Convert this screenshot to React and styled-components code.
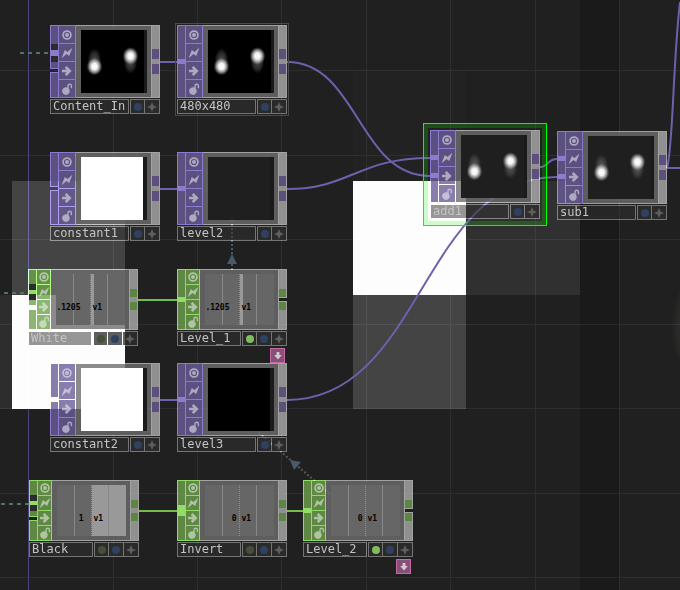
import React from "react";
import styled, { createGlobalStyle, css } from "styled-components";

const GlobalStyle = createGlobalStyle`
  * { box-sizing: border-box; }
  html, body, #root { margin: 0; min-height: 100vh; }
  body { background: #202020; overflow: hidden; }
  button { appearance: none; margin: 0; padding: 0; border: 0; background: none; font: inherit; }
`;

const MONO = '"DejaVu Sans Mono", "Liberation Mono", monospace';

const families = {
  top: { fill: "rgba(107, 92, 153, 0.8)", port: "#5d507f", glow: "#6c5ab0", live: "#8f7bcb" },
  chop: { fill: "rgba(110, 162, 76, 0.8)", port: "#5d8643", glow: "#70bb42", live: "#93dc66" },
};

/* Edges are added to whatever is beneath them, so they brighten over lit areas. */
const glowEdge = css`
  position: relative;
  border: 1px solid transparent;
  background-clip: padding-box;
  &::after {
    content: "";
    position: absolute;
    inset: -1px;
    border: inherit;
    border-color: ${(p) => p.$glow || "#545454"};
    mix-blend-mode: plus-lighter;
    pointer-events: none;
  }
`;

const Canvas = styled.main`
  position: relative;
  width: 100%;
  min-height: 100vh;
  overflow: hidden;
  background: #202020;
`;

const Tile = styled.div`
  position: absolute;
  left: ${(p) => p.$x}px;
  top: ${(p) => p.$y}px;
  width: ${(p) => p.$w}px;
  height: ${(p) => p.$h};
  background: ${(p) => p.$tone};
`;

const Glare = styled.div`
  position: absolute;
  left: 671px;
  top: 262px;
  width: 90px;
  height: 130px;
  border-radius: 50%;
  background: radial-gradient(closest-side, #3a3a38, #2a2a29 85%, #202020);
`;

const Layer = styled.svg`
  position: absolute;
  inset: 0;
  width: 100%;
  height: 100%;
  overflow: visible;
  fill: none;
  mix-blend-mode: ${(p) => (p.$additive ? "plus-lighter" : "normal")};
`;

const NodeFrame = styled.article`
  position: absolute;
  left: ${(p) => p.$x}px;
  top: ${(p) => p.$y}px;
  width: 110px;
  display: flex;
  flex-direction: column;
  gap: 1px;
  ${(p) => p.$state === "current" && css`
    outline: 1px solid #4a4a4a;
    outline-offset: 1px;
  `}
  ${(p) => p.$state === "selected" && css`
    &::before {
      content: "";
      position: absolute;
      inset: -7px;
      border: 1px solid #00ff00;
      box-shadow: inset 0 0 0 4px rgba(0, 255, 0, 0.2);
      pointer-events: none;
    }
  `}
`;

const Operator = styled.div`
  display: flex;
  height: ${(p) => (p.$kind === "top" ? 73 : 61)}px;
`;

const InputStrip = styled.div`
  position: relative;
  width: 8px;
  display: flex;
  flex-direction: column;
  gap: 3px;
`;

const InputPart = styled.div`
  ${glowEdge}
  border-right: 0;
  flex: ${(p) => (p.$h ? `0 0 ${p.$h}px` : "1")};
  background-color: ${(p) => p.$fill};
  &::after { inset: -1px 0 -1px -1px; }
`;

const Port = styled.span`
  position: absolute;
  left: 0;
  right: 0;
  top: ${(p) => p.$y}px;
  height: ${(p) => p.$h || 5}px;
  background: ${(p) => p.$tone};
`;

const ReferencePort = styled(Port)`
  left: 1px;
  border: solid #2c2c2c;
  border-width: 6px 0;
`;

const FlagColumn = styled.div`
  width: ${(p) => (p.$kind === "top" ? 18 : 15)}px;
  display: flex;
  flex-direction: column;
`;

const OperatorFlag = styled.button`
  ${glowEdge}
  flex: 1;
  min-height: 0;
  display: grid;
  place-items: center;
  color: rgba(255, 255, 255, 0.5);
  background-color: ${(p) => p.$fill};
  &:not(:last-child) { border-bottom: 0; }
  &:not(:last-child)::after { bottom: 0; }
`;

const Body = styled.div`
  ${glowEdge}
  flex: 1;
  border-width: 1px 0;
  padding: 4px 4px 4px 5px;
  display: flex;
  background-color: rgba(110, 110, 110, 0.8);
  &::after { inset: -1px 0; border-color: #828282; }
`;

const OutputStrip = styled.div`
  ${glowEdge}
  width: 9px;
  display: flex;
  flex-direction: column;
  justify-content: center;
  gap: 5px;
  background-color: rgba(172, 172, 172, 0.8);
  &::after { border-color: #828282; }
`;

const OutputPort = styled.span`
  height: ${(p) => (p.$kind === "top" ? 10 : 8)}px;
  background: ${(p) => p.$tone};
`;

const OutputCut = styled.span`
  position: absolute;
  left: 0;
  right: -1px;
  top: 27px;
  height: 5px;
  border: solid #a2a2a2;
  border-width: 1px 0;
  background: #202020;
  z-index: 1;
`;

const Picture = styled.div`
  flex: 1;
  display: flex;
  background: #1b1b1b;
`;

const Screen = styled.svg`
  display: block;
  width: ${(p) => p.$w}px;
  height: 63px;
  background: ${(p) => p.$tone};
`;

const Graph = styled.div`
  position: relative;
  flex: 1;
  display: grid;
  grid-template-columns: minmax(0, 1fr) minmax(0, 1fr);
  align-items: end;
  padding-bottom: 12px;
  background:
    linear-gradient(#888, #888) 25% 0 / 1px 100% no-repeat,
    linear-gradient(#888, #888) 75% 0 / 1px 100% no-repeat,
    repeating-linear-gradient(#909090 0 1px, transparent 1px 2px) 50% 0 / 1px 100% no-repeat,
    linear-gradient(#999, #999) 35px 0 / ${(p) => p.$bar}px 100% no-repeat,
    #666;
  color: #000;
  font: 700 8px/10px ${MONO};
  white-space: pre;
`;

const Value = styled.span`
  text-align: right;
  padding-right: ${(p) => p.$trail}px;
`;

const Channel = styled.span`
  padding-left: 2px;
`;

const Footer = styled.div`
  display: flex;
  gap: 1px;
  height: 15px;
`;

const Name = styled.div`
  ${glowEdge}
  flex: 1;
  padding-left: 2px;
  background-color: rgba(51, 51, 51, 0.51);
  color: #c4c4c4;
  font: 12px/13px ${MONO};
  white-space: nowrap;
`;

const FlagRow = styled.div`
  display: flex;
`;

const DisplayFlag = styled.button`
  ${glowEdge}
  width: 15px;
  height: 15px;
  display: grid;
  place-items: center;
  color: ${(p) => p.$tone};
  background-color: rgba(45, 45, 45, 0.77);
  &:not(:first-child) { border-left: 0; }
  &:not(:first-child)::after { left: 0; }
`;

const ExportBadge = styled.button`
  position: absolute;
  right: 2px;
  top: calc(100% + 2px);
  width: 15px;
  height: 15px;
  display: grid;
  place-items: center;
  border: 1px solid #c66aa4;
  background: #85507a;
  color: #d8c8d4;
`;

const Glyph = styled.svg`
  display: block;
  width: 12px;
  height: 12px;
  fill: currentColor;
`;

const TargetIcon = () => (
  <Glyph viewBox="0 0 12 12">
    <path
      fillRule="evenodd"
      d="M6 1.2a4.8 4.8 0 1 0 0 9.6A4.8 4.8 0 1 0 6 1.2ZM6 2.9a3.1 3.1 0 1 1 0 6.2A3.1 3.1 0 1 1 6 2.9ZM6 4a2 2 0 1 0 0 4A2 2 0 1 0 6 4Z"
    />
  </Glyph>
);
const BoltIcon = () => (
  <Glyph viewBox="0 0 12 12"><path d="M.6 11.2 3.8 3 6.5 5 11.4.8 8.2 9 5.5 7Z" /></Glyph>
);
const ArrowIcon = () => (
  <Glyph viewBox="0 0 12 12"><path d="M1 4.7H5.4L3.8 2.8 5.6 1.1 10.6 6 5.6 10.9 3.8 9.2 5.4 7.3H1Z" /></Glyph>
);
const LockIcon = () => (
  <Glyph viewBox="0 0 12 12">
    <path d="M4.9 4.3C5.4 4.3 5.9 4.4 6.3 4.6V2.9A2.4 2.4 0 0 1 11.1 2.9V5.2H9.7V3A1 1 0 0 0 7.7 3V5.5A3.8 3.8 0 1 1 4.9 4.3Z" />
  </Glyph>
);
const DotIcon = () => (
  <Glyph viewBox="0 0 12 12"><circle cx="6" cy="6" r="4" /></Glyph>
);
const StarIcon = () => (
  <Glyph viewBox="0 0 12 12"><path d="M6 1 7.5 4.5 11 6 7.5 7.5 6 11 4.5 7.5 1 6 4.5 4.5Z" /></Glyph>
);
const DownIcon = () => (
  <Glyph viewBox="0 0 12 12"><path d="M4.6 2H7.4V5H9.8L6 9.6 2.2 5H4.6Z" /></Glyph>
);

const operatorFlags = [
  ["Viewer", TargetIcon],
  ["Cook", BoltIcon],
  ["Bypass", ArrowIcon],
  ["Lock", LockIcon],
];

const nodes = [
  { name: "Content_In", kind: "top", x: 50, y: 25, split: 44, reference: 19, view: "blobs", tone: "#000" },
  { name: "480x480", kind: "top", x: 177, y: 25, inputs: [34], view: "blobs", tone: "#000", state: "current" },
  { name: "constant1", kind: "top", x: 50, y: 152, split: 35, tone: "#fff" },
  { name: "level2", kind: "top", x: 177, y: 152, inputs: [34], tone: "#1f1f1f" },
  { name: "White", kind: "chop", x: 28, y: 269, split: 37, reference: 15, value: ".1205", trail: 10, bar: 3 },
  { name: "Level_1", kind: "chop", x: 177, y: 269, inputs: [28], value: ".1205", trail: 10, bar: 3, active: true, open: true },
  { name: "constant2", kind: "top", x: 50, y: 363, split: 35, tone: "#fff" },
  { name: "level3", kind: "top", x: 177, y: 363, inputs: [34], tone: "#000" },
  { name: "Black", kind: "chop", x: 29, y: 480, split: 37, reference: 15, value: "1", trail: 8, bar: 34 },
  { name: "Invert", kind: "chop", x: 177, y: 480, inputs: [25], portHeight: 11, value: "0", trail: 3, bar: 0 },
  { name: "Level_2", kind: "chop", x: 303, y: 480, inputs: [28], value: "0", trail: 3, bar: 0, active: true, open: true },
  { name: "add1", kind: "top", x: 430, y: 130, inputs: [25, 43], view: "blobs", tone: "#1f1f1f", state: "selected" },
  { name: "sub1", kind: "top", x: 557, y: 131, inputs: [25, 43], view: "blobs", tone: "#1f1f1f" },
];

function Blobs() {
  return (
    <>
      <ellipse cx="13.5" cy="30" rx="7" ry="12" fill="url(#haze)" />
      <ellipse cx="13.5" cy="36.5" rx="8" ry="9" fill="url(#spot)" />
      <ellipse cx="49.5" cy="32" rx="7" ry="12" fill="url(#haze)" />
      <ellipse cx="49.5" cy="26" rx="8" ry="9" fill="url(#spot)" />
    </>
  );
}

function OperatorNode({ node }) {
  const { kind } = node;
  const f = families[kind];
  return (
    <NodeFrame $x={node.x} $y={node.y} $state={node.state} aria-label={node.name}>
      <Operator $kind={kind}>
        <InputStrip>
          <InputPart $h={node.split} $fill={f.fill} $glow={f.glow} />
          {node.split && <InputPart $fill={f.fill} $glow={f.glow} />}
          {node.reference && (
            <ReferencePort $y={node.reference} $h={kind === "top" ? 18 : 16} $tone={f.live} />
          )}
          {(node.inputs || []).map((y) => (
            <Port key={y} $y={y} $h={node.portHeight} $tone={f.live} />
          ))}
        </InputStrip>
        <FlagColumn $kind={kind}>
          {operatorFlags.map(([label, Icon]) => (
            <OperatorFlag key={label} type="button" aria-label={label} $fill={f.fill} $glow={f.glow}>
              <Icon />
            </OperatorFlag>
          ))}
        </FlagColumn>
        <Body>
          {kind === "top" ? (
            <Picture>
              <Screen $w={node.view ? 63 : 62} $tone={node.tone}>{node.view && <Blobs />}</Screen>
            </Picture>
          ) : (
            <Graph $bar={node.bar}>
              <Value $trail={node.trail}>{node.value}</Value>
              <Channel>v1</Channel>
            </Graph>
          )}
        </Body>
        <OutputStrip>
          <OutputPort $kind={kind} $tone={f.port} />
          <OutputPort $kind={kind} $tone={f.port} />
          {node.open && <OutputCut />}
        </OutputStrip>
      </Operator>
      <Footer>
        <Name>{node.name}</Name>
        <FlagRow>
          {kind === "chop" && (
            <DisplayFlag type="button" aria-label="Export" $tone={node.active ? "#82ba60" : "#445039"}><DotIcon /></DisplayFlag>
          )}
          <DisplayFlag type="button" aria-label="Display" $tone="#2f4160"><DotIcon /></DisplayFlag>
          <DisplayFlag type="button" aria-label="Activate viewer" $tone="#5e5e5e"><StarIcon /></DisplayFlag>
        </FlagRow>
      </Footer>
      {node.active && <ExportBadge type="button" aria-label="Exporting"><DownIcon /></ExportBadge>}
    </NodeFrame>
  );
}

const columns = [113, 197, 281, 366, 450, 535, 619];
const rows = [70, 155, 239, 324, 408, 493, 577];

export default function App() {
  return (
    <>
      <GlobalStyle />
      <Canvas>
        <Tile $x={580} $y={0} $w={39} $h="100%" $tone="#1a1a1a" />
        <Tile $x={353} $y={69} $w={113} $h="112px" $tone="#222222" />
        <Tile $x={353} $y={181} $w={113} $h="114px" $tone="#fdfdfd" />
        <Tile $x={466} $y={181} $w={114} $h="114px" $tone="#303030" />
        <Tile $x={353} $y={295} $w={113} $h="114px" $tone="#444444" />
        <Tile $x={12} $y={181} $w={113} $h="114px" $tone="#444444" />
        <Tile $x={0} $y={295} $w={12} $h="114px" $tone="#2d2d2d" />
        <Tile $x={12} $y={295} $w={113} $h="114px" $tone="#fdfdfd" />
        <Glare />

        <Layer $additive aria-hidden="true" shapeRendering="crispEdges">
          <g fill="#0d0d12">
            {columns.map((x) => <rect key={x} x={x} y="0" width="1" height="100%" />)}
            {rows.map((y) => <rect key={y} x="0" y={y} width="100%" height="1" />)}
          </g>
          <rect x="28" y="0" width="1" height="100%" fill="#28245e" />
        </Layer>

        <Layer aria-hidden="true">
          <defs>
            <radialGradient id="spot">
              <stop offset="0" stopColor="#fff" />
              <stop offset=".35" stopColor="#f2f2f2" />
              <stop offset=".65" stopColor="#bbb" stopOpacity=".75" />
              <stop offset="1" stopColor="#777" stopOpacity="0" />
            </radialGradient>
            <radialGradient id="haze">
              <stop offset="0" stopColor="#888" stopOpacity=".6" />
              <stop offset=".6" stopColor="#666" stopOpacity=".4" />
              <stop offset="1" stopColor="#555" stopOpacity="0" />
            </radialGradient>
          </defs>
          <g stroke="#7060ab" strokeWidth="2">
            <path d="M160 62H177M160 189H177M160 400H177" />
            <path d="M287 62C358 62 358 176 430 176" />
            <path d="M287 189C350 189 358 158 430 158" />
            <path d="M287 400C422 400 422 177 557 177" />
            <path d="M540 167C549 167 547 159 557 159" />
            <path d="M667 168H680M667 168C673 150 673 60 680 2" />
          </g>
          <path d="M138 300H177M139 511H177M287 511H303" stroke="#72be46" strokeWidth="2" />
          <g stroke="#527264" strokeWidth="2" strokeDasharray="4 4">
            <path d="M20 53H50M4 293H28M1 504H29" />
          </g>
          <g stroke="#4b5a68" strokeWidth="2" strokeDasharray="2 2">
            <path d="M232 270V220M330 494 258 432" />
          </g>
          <path d="M232 254 237 264H227ZM290 460 301 462 294 470Z" fill="#4b5a68" />
        </Layer>

        {nodes.map((node) => <OperatorNode key={node.name} node={node} />)}
      </Canvas>
    </>
  );
}
